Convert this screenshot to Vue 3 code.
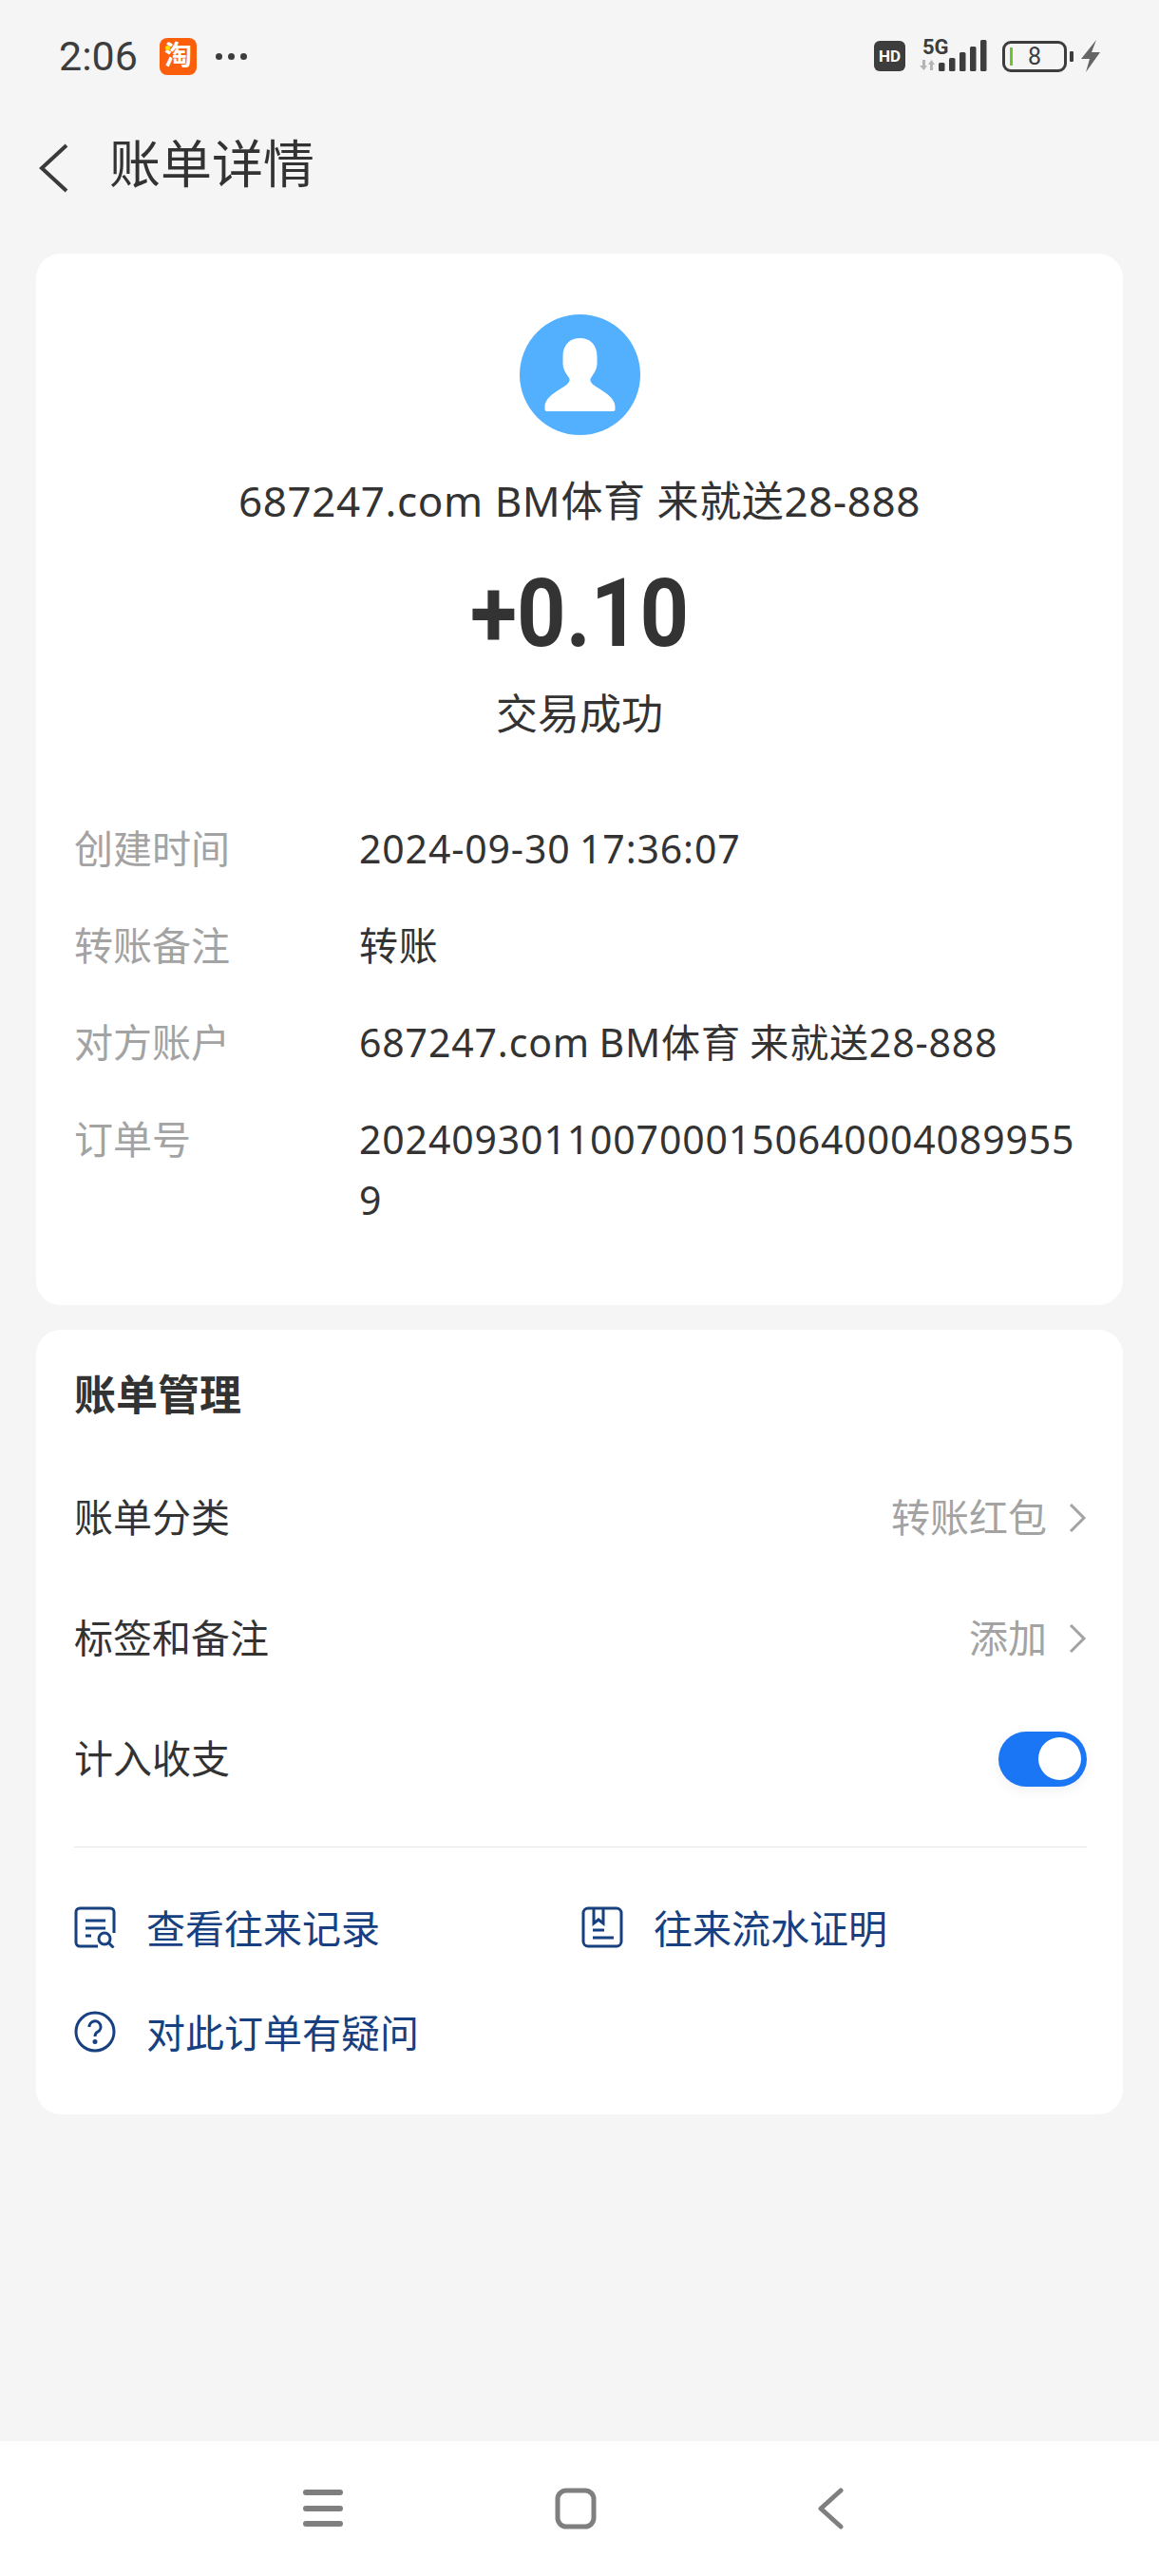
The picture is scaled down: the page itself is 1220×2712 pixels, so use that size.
<script setup>
import { ref } from "vue";

const details = [
  { label: "创建时间", value: "2024-09-30 17:36:07" },
  { label: "转账备注", value: "转账" },
  { label: "对方账户", value: "687247.com BM体育 来就送28-888" },
  { label: "订单号", value: "20240930110070001506400040899559" },
];

const manage = [
  { label: "账单分类", value: "转账红包" },
  { label: "标签和备注", value: "添加" },
];

const counted = ref(true);
</script>

<template>
  <div class="page">
    <div class="status-bar">
      <div class="status-left">
        <span class="time">2:06</span>
        <span class="taobao"><i></i>淘</span>
        <span class="dots"><i></i><i></i><i></i></span>
      </div>
      <div class="status-right">
        <span class="hd">HD</span>
        <div class="signal">
          <span class="five-g">5G</span>
          <svg width="72" height="34" viewBox="0 0 72 34">
            <polygon points="3,21 6,21 6,27 8,27 4.500,32 0,27 3,27" fill="#b5b5b5" />
            <polygon points="11,32 14,32 14,26 16,26 12.500,21 9,26 11,26" fill="#b5b5b5" />
            <rect x="20" y="24" width="6.500" height="9" rx="1.500" fill="#3d3d3d" />
            <rect x="31" y="19" width="6.500" height="14" rx="1.500" fill="#3d3d3d" />
            <rect x="42" y="13" width="6.500" height="20" rx="1.500" fill="#3d3d3d" />
            <rect x="53" y="7" width="6.500" height="26" rx="1.500" fill="#3d3d3d" />
            <rect x="64" y="0" width="6.500" height="33" rx="1.500" fill="#3d3d3d" />
          </svg>
        </div>
        <div class="battery">
          <i class="level"></i>
          <span>8</span>
        </div>
        <i class="nub"></i>
        <svg class="bolt" width="20" height="34" viewBox="0 0 20 34">
          <path d="M16 0L0 20h9L5 34l15-21h-9z" fill="#666" />
        </svg>
      </div>
    </div>

    <header class="top-bar">
      <svg width="31" height="52" viewBox="0 0 31 52">
        <path d="M29 2L3 26l26 24" fill="none" stroke="#3a3a3a" stroke-width="4" />
      </svg>
      <h1>账单详情</h1>
    </header>

    <section class="card bill">
      <div class="avatar">
        <svg width="127" height="127" viewBox="0 0 127 127">
          <path
            d="M63.500 25c-10.500 0-18 7-18 19v8c0 5 3 10 6 14 2 3 1 5-2 8-5 4-23 12-23 23v3c0 1 1 2 2 2h70c1 0 2-1 2-2v-3c0-11-18-19-23-23-3-3-4-5-2-8 3-4 6-9 6-14v-8c0-12-7.500-19-18-19z"
            fill="#fff"
          />
        </svg>
      </div>
      <p class="name">687247.com BM体育 来就送28-888</p>
      <p class="amount">+0.10</p>
      <p class="state">交易成功</p>

      <div class="details">
        <div v-for="item in details" :key="item.label" class="detail-row">
          <span class="detail-label">{{ item.label }}</span>
          <span class="detail-value">{{ item.value }}</span>
        </div>
      </div>
    </section>

    <section class="card manage">
      <h2>账单管理</h2>
      <div v-for="item in manage" :key="item.label" class="manage-row">
        <span class="manage-label">{{ item.label }}</span>
        <span class="manage-value">
          {{ item.value }}
          <svg width="20" height="32" viewBox="0 0 20 32">
            <path d="M3 2l14 14L3 30" fill="none" stroke="#a3a3a3" stroke-width="3" />
          </svg>
        </span>
      </div>
      <div class="manage-row">
        <span class="manage-label">计入收支</span>
        <button class="switch" :class="{ on: counted }" @click="counted = !counted">
          <i></i>
        </button>
      </div>

      <div class="links">
        <a class="link">
          <svg width="44" height="44" viewBox="0 0 44 44" fill="none" stroke="#16407f" stroke-width="3">
            <path d="M25 42H6a4 4 0 0 1-4-4V6a4 4 0 0 1 4-4h32a4 4 0 0 1 4 4v22" />
            <path d="M12 15h21M12 23h21M12 31h6" />
            <circle cx="32" cy="34" r="6" />
            <path d="M36.500 38.500l5 5" />
          </svg>
          查看往来记录
        </a>
        <a class="link">
          <svg width="44" height="44" viewBox="0 0 44 44" fill="none" stroke="#16407f" stroke-width="3">
            <rect x="2" y="2" width="40" height="40" rx="5" />
            <path d="M13 2v16l5-4 5 4V2" />
            <path d="M12 25h12M12 33h22" />
          </svg>
          往来流水证明
        </a>
        <a class="link">
          <svg width="44" height="44" viewBox="0 0 44 44" fill="none" stroke="#16407f" stroke-width="3">
            <circle cx="22" cy="22" r="20" />
            <path d="M16 17a6 6 0 1 1 9 5c-2 1-3 2-3 5" />
            <circle cx="22" cy="32.500" r="1" fill="#16407f" />
          </svg>
          对此订单有疑问
        </a>
      </div>
    </section>

    <nav class="nav-bar">
      <svg width="44" height="44" viewBox="0 0 44 44" stroke="#7f7f7f" stroke-width="6" stroke-linecap="round">
        <path d="M4 5h36M4 22h36M4 38h36" />
      </svg>
      <svg class="nav-home" width="44" height="44" viewBox="0 0 44 44" fill="none" stroke="#7f7f7f" stroke-width="5">
        <rect x="3" y="3" width="38" height="38" rx="9" />
      </svg>
      <svg class="nav-back" width="28" height="44" viewBox="0 0 28 44" fill="none" stroke="#7f7f7f" stroke-width="5" stroke-linecap="round" stroke-linejoin="round">
        <path d="M25 3L4 22l21 19" />
      </svg>
    </nav>
  </div>
</template>

<style scoped>
.page {
  display: flex;
  flex-direction: column;
  height: 2712px;
  background-color: #f5f5f5;
  color: #333;
  font-family: "Noto Sans", "Noto Sans CJK SC", sans-serif;
  font-size: 41px;
  overflow: hidden;
}

p,
h1,
h2 {
  margin: 0;
  font-weight: 400;
}

.status-bar {
  display: flex;
  justify-content: space-between;
  align-items: center;
  height: 118px;
  padding: 0 62px;
  flex-shrink: 0;
  font-family: Roboto, "Noto Sans CJK SC", sans-serif;
}
.status-left,
.status-right {
  display: flex;
  align-items: center;
}
.time {
  width: 106px;
  font-size: 43px;
  color: #3d3d3d;
}
.taobao {
  position: relative;
  display: flex;
  align-items: center;
  justify-content: center;
  width: 39px;
  height: 39px;
  border-radius: 8px;
  background-color: #fb5f0c;
  color: #fff;
  font-size: 29px;
  font-weight: 700;
  line-height: 1;
}
.taobao i {
  position: absolute;
  top: 8px;
  left: 6px;
  width: 5px;
  height: 5px;
  border-radius: 50%;
  background-color: #ffe100;
}
.dots {
  display: flex;
  gap: 6px;
  margin-left: 20px;
}
.dots i {
  width: 7px;
  height: 7px;
  border-radius: 50%;
  background-color: #3d3d3d;
}
.hd {
  display: flex;
  align-items: center;
  justify-content: center;
  width: 33px;
  height: 32px;
  border-radius: 6px;
  background-color: #3d3d3d;
  color: #fff;
  font-size: 17px;
  font-weight: 700;
}
.signal {
  position: relative;
  width: 72px;
  height: 34px;
  margin-left: 15px;
}
.signal svg {
  display: block;
}
.five-g {
  position: absolute;
  left: 3px;
  top: -2px;
  font-size: 22px;
  line-height: 20px;
  font-weight: 700;
  color: #3d3d3d;
}
.battery {
  position: relative;
  display: flex;
  align-items: center;
  justify-content: center;
  width: 68px;
  height: 33px;
  margin-left: 15px;
  border: 3px solid #3d3d3d;
  border-radius: 9px;
  box-sizing: border-box;
  font-size: 25px;
  color: #3d3d3d;
}
.level {
  position: absolute;
  left: 5px;
  top: 4px;
  width: 3px;
  height: 19px;
  background-color: #6cc52c;
}
.nub {
  width: 4px;
  height: 11px;
  margin-left: 3px;
  border-radius: 1px;
  background-color: #3d3d3d;
}
.bolt {
  margin-left: 8px;
}

.top-bar {
  display: flex;
  align-items: center;
  gap: 43px;
  height: 108px;
  padding-left: 41px;
  flex-shrink: 0;
}
.top-bar svg {
  margin-top: 9px;
}
.top-bar h1 {
  font-size: 54px;
  line-height: 64px;
}

.card {
  margin: 0 38px;
  padding: 0 38px 0 40px;
  background-color: #fff;
  border-radius: 26px;
  flex-shrink: 0;
}
.bill {
  margin-top: 41px;
  padding: 64px 40px 79px;
}
.avatar {
  width: 127px;
  height: 127px;
  margin: 0 auto;
  border-radius: 50%;
  background-color: #52b0ff;
}
.avatar svg {
  display: block;
}
.name {
  margin-top: 39px;
  font-size: 44px;
  line-height: 60px;
  letter-spacing: 0.6px;
  text-align: center;
}
.amount {
  margin-top: 29px;
  font-family: Roboto, sans-serif;
  font-size: 100px;
  line-height: 120px;
  font-weight: 700;
  text-align: center;
  transform: scaleX(0.9);
}
.state {
  margin-top: 15px;
  font-size: 44px;
  line-height: 60px;
  text-align: center;
}
.details {
  display: flex;
  flex-direction: column;
  gap: 38px;
  margin-top: 80px;
}
.detail-row {
  display: flex;
  line-height: 64px;
}
.detail-label {
  width: 300px;
  flex-shrink: 0;
  color: #a3a3a3;
}
.detail-value {
  flex: 1;
  word-break: break-all;
  letter-spacing: 0.85px;
  word-spacing: -2px;
}

.manage {
  margin-top: 26px;
  padding-top: 38px;
  padding-bottom: 32px;
}
.manage h2 {
  margin-bottom: 36px;
  font-size: 44px;
  line-height: 60px;
  font-weight: 700;
}
.manage-row {
  display: flex;
  justify-content: space-between;
  align-items: center;
  height: 127px;
}
.manage-label {
  padding-bottom: 5px;
}
.manage-value {
  display: flex;
  align-items: center;
  gap: 22px;
  padding-bottom: 5px;
  color: #a3a3a3;
}
.manage-value svg {
  margin-top: 5px;
}
.switch {
  position: relative;
  width: 93px;
  height: 58px;
  padding: 0;
  border: none;
  border-radius: 29px;
  background-color: #c9c9c9;
  box-shadow: 0 4px 14px rgba(0, 0, 0, 0.06);
  cursor: pointer;
}
.switch.on {
  background-color: #1b76f5;
}
.switch i {
  position: absolute;
  top: 6px;
  left: 6px;
  width: 45px;
  height: 45px;
  border-radius: 50%;
  background-color: #fff;
}
.switch.on i {
  left: 42px;
}
.links {
  display: grid;
  grid-template-columns: 534px 1fr;
  grid-auto-rows: 110px;
  margin-top: 29px;
  padding-top: 29px;
  border-top: 1px solid #e6e6e6;
}
.link {
  display: flex;
  align-items: center;
  gap: 32px;
  padding-bottom: 3px;
  color: #16407f;
  cursor: pointer;
}
.link svg {
  margin-top: 3px;
}

.nav-bar {
  display: flex;
  align-items: center;
  height: 142px;
  margin-top: auto;
  padding-left: 318px;
  background-color: #fff;
  flex-shrink: 0;
}
.nav-home {
  margin-left: 222px;
}
.nav-back {
  margin-left: 232px;
}
</style>

<style>
html,
body {
  margin: 0;
  background-color: #f5f5f5;
}
</style>
